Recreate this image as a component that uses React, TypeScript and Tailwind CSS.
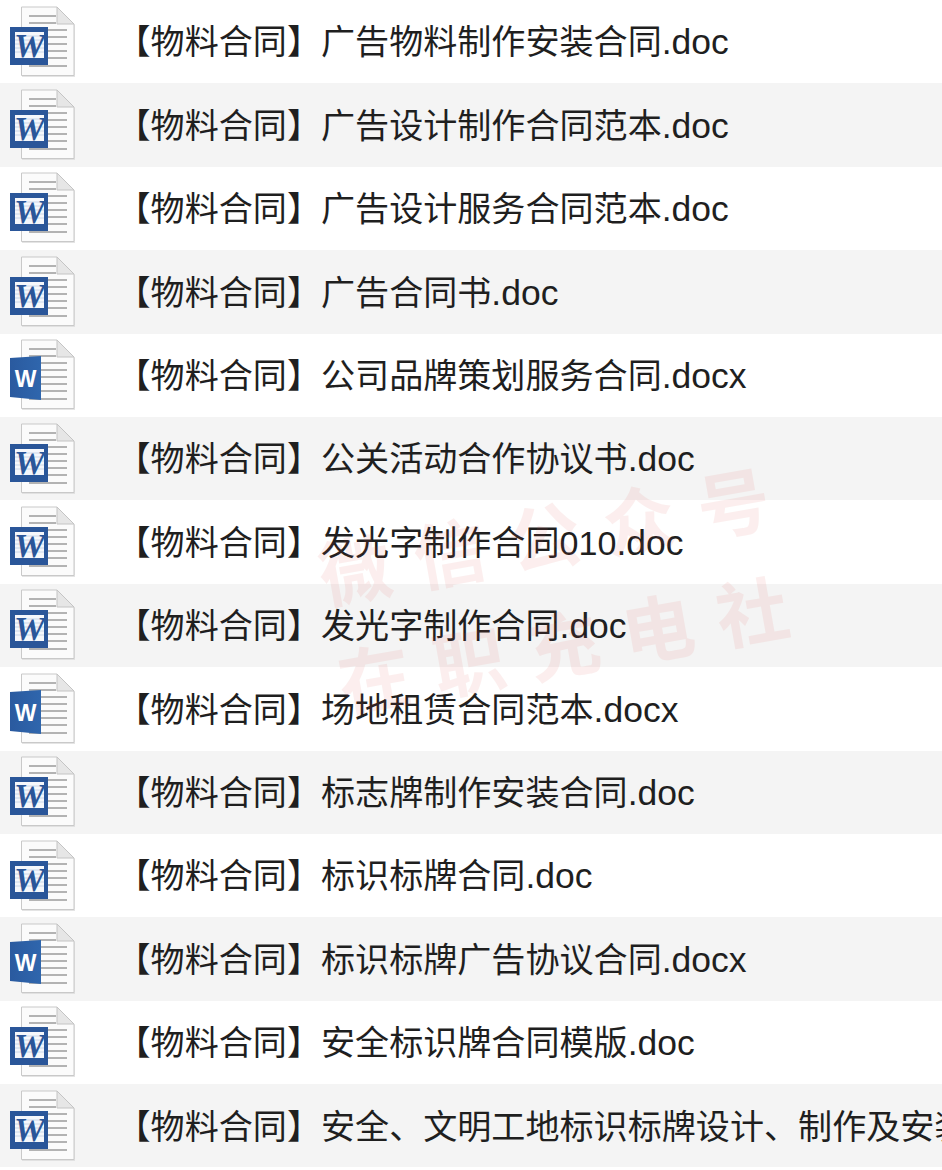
const rows: [string, string, boolean][] = [
  ["广告物料制作安装合同", ".doc", false],
  ["广告设计制作合同范本", ".doc", false],
  ["广告设计服务合同范本", ".doc", false],
  ["广告合同书", ".doc", false],
  ["公司品牌策划服务合同", ".docx", true],
  ["公关活动合作协议书", ".doc", false],
  ["发光字制作合同010", ".doc", false],
  ["发光字制作合同", ".doc", false],
  ["场地租赁合同范本", ".docx", true],
  ["标志牌制作安装合同", ".doc", false],
  ["标识标牌合同", ".doc", false],
  ["标识标牌广告协议合同", ".docx", true],
  ["安全标识牌合同模版", ".doc", false],
  ["安全、文明工地标识标牌设计、制作及安装合同", ".doc", false],
];

function WordIcon({ modern }: { modern: boolean }) {
  return (
    <svg width="80" height="80" viewBox="0 1 80 80" className="shrink-0">
      <defs>
        <linearGradient id="blue" x1="0" x2="1" y1="0" y2="0">
          <stop offset="0" stopColor="#2a5a9f" />
          <stop offset="1" stopColor="#2f66ad" />
        </linearGradient>
      </defs>
      <path d="M22 7.5H58L75 24V76H22Z" fill="#d9d9d9" opacity="0.7" />
      <path d="M21.5 6H57L74 23V74.5H21.5Z" fill="#fbfbfb" stroke="#c9c9c9" strokeWidth="1" />
      <path d="M57 6V23H74Z" fill="#e6e6e6" stroke="#c4c4c4" strokeWidth="1" />
      <g stroke="#b3b3b3" strokeWidth="2">
        <path d="M29 15H56M29 22H56" />
        <path d="M29 29H67M29 36H67M29 43H67M29 50H67M29 57H67M29 65H67" />
      </g>
      {modern ? (
        <>
          <path d="M10 24L41 22V66L10 63Z" fill="url(#blue)" />
          <text x="25.5" y="53" textAnchor="middle" fontFamily="Liberation Sans" fontWeight="700" fontSize="23" fill="#ffffff">
            W
          </text>
        </>
      ) : (
        <>
          <rect x="10" y="26" width="38" height="38" fill="#2a5699" />
          <rect x="15" y="31" width="29" height="26" fill="#f5f7fb" />
          <path d="M15 35H44M15 39H44M15 43H44M15 47H44M15 51H44" stroke="#c9d6e8" strokeWidth="1" />
          <text x="14" y="56" fontFamily="Liberation Serif" fontStyle="italic" fontWeight="700" fontSize="34" textLength="31" lengthAdjust="spacingAndGlyphs" fill="#2a5699">
            W
          </text>
        </>
      )}
    </svg>
  );
}

export default function App() {
  return (
    <div className="relative w-[942px] h-[1170px] overflow-hidden bg-white font-['Liberation_Sans','Noto_Sans_CJK_SC',sans-serif]">
      {rows.map(([name, ext, modern], i) => (
        <div
          key={i}
          className={`flex items-center h-[83.4px] overflow-hidden ${i % 2 === 1 ? "bg-[#f4f4f4]" : "bg-white"}`}
        >
          <WordIcon modern={modern} />
          <span className="ml-[36.5px] pt-[3px] whitespace-nowrap text-[34.1px] leading-none text-[#1f1f1f]">
            【物料合同】{name}
            <span className="text-[35.5px]">{ext}</span>
          </span>
        </div>
      ))}
      <div className="absolute left-[326px] top-[480px] w-[496px] pointer-events-none -rotate-[10deg] text-[#e0524a] opacity-[0.09] text-[72px] leading-[110px] font-bold tracking-[24px] whitespace-nowrap">
        <div>微信公众号</div>
        <div>在职充电社</div>
      </div>
    </div>
  );
}
